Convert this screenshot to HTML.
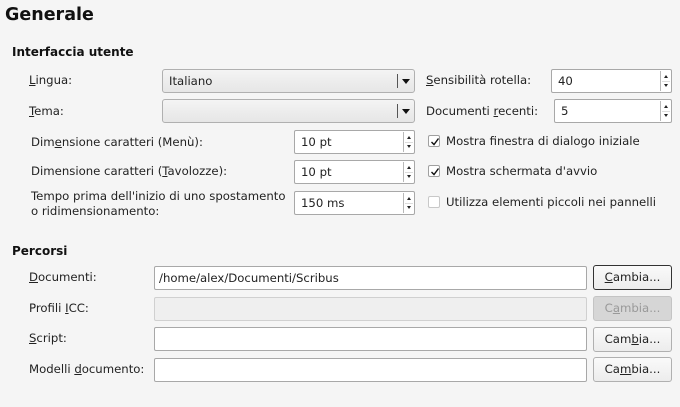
<!DOCTYPE html>
<html><head><meta charset="utf-8"><style>
*{box-sizing:border-box;margin:0;padding:0}
body{width:680px;height:407px;background:#f5f5f5;font-family:"DejaVu Sans","Liberation Sans",sans-serif;font-size:11.7px;color:#222;position:relative;overflow:hidden}
.a{position:absolute;white-space:nowrap}
.h1{font-size:17.5px;font-weight:bold;left:5px;top:5px;color:#111}
.h2{font-weight:bold;font-size:12px;color:#111}
.lbl{line-height:13px}
u{text-decoration:underline}
.combo{position:absolute;height:24px;border:1px solid #b0b0b0;border-radius:3px;background:linear-gradient(#f4f4f4,#e6e6e6);padding-left:6px;line-height:22px}
.combo .sep{position:absolute;right:16px;top:4px;bottom:4px;border-left:1px solid #555}
.combo .ar{position:absolute;right:4px;top:9px;width:0;height:0;border-left:4px solid transparent;border-right:4px solid transparent;border-top:5px solid #111}
.spin{position:absolute;height:24px;border:1px solid #a8a8a8;border-radius:2px;background:#fff;padding-left:6px;line-height:22px}
.spin .sep{position:absolute;right:10px;top:1px;bottom:1px;border-left:1px solid #b8b8b8}
.spin .up{position:absolute;right:3px;top:5px;border-left:2px solid transparent;border-right:2px solid transparent;border-bottom:3px solid #222}
.spin .dn{position:absolute;right:3px;bottom:5px;border-left:2px solid transparent;border-right:2px solid transparent;border-top:3px solid #222}
.spin .mid{position:absolute;right:1px;width:8px;top:11px;border-top:1px solid #ddd}
.cb{position:absolute;width:12px;height:12px;border:1px solid #a0a0a0;background:#fff;border-radius:2px}
.cb svg{position:absolute;left:1px;top:1px}
.fld{position:absolute;left:154px;width:433px;height:24px;border:1px solid #a8a8a8;border-radius:2px;background:#fff;padding-left:4px;line-height:22px}
.btn{position:absolute;left:593px;width:79px;height:25px;border:1px solid #b0b0b0;border-radius:3px;background:linear-gradient(#fafafa,#ececec);text-align:center;line-height:23px}
</style></head><body>
<div class="a h1">Generale</div>
<div class="a h2" style="left:12px;top:45px">Interfaccia utente</div>

<div class="a lbl" style="left:29px;top:74px"><u>L</u>ingua:</div>
<div class="combo" style="left:162px;top:69px;width:253px">Italiano<div class="sep"></div><div class="ar"></div></div>
<div class="a lbl" style="left:29px;top:105px"><u>T</u>ema:</div>
<div class="combo" style="left:162px;top:99px;width:253px"><div class="sep"></div><div class="ar"></div></div>

<div class="a lbl" style="left:31px;top:136px">Dim<u>e</u>nsione caratteri (Menù):</div>
<div class="spin" style="left:294px;top:130px;width:121px">10 pt<div class="sep"></div><div class="up"></div><div class="mid"></div><div class="dn"></div></div>
<div class="a lbl" style="left:31px;top:165px">Dimensione caratteri (<u>T</u>avolozze):</div>
<div class="spin" style="left:294px;top:160px;width:121px">10 pt<div class="sep"></div><div class="up"></div><div class="mid"></div><div class="dn"></div></div>
<div class="a lbl" style="left:31px;top:189px;line-height:15px">Tempo prima dell'inizio di uno spostamento<br>o ridimensionamento:</div>
<div class="spin" style="left:294px;top:191px;width:121px">150 ms<div class="sep"></div><div class="up"></div><div class="mid"></div><div class="dn"></div></div>

<div class="a lbl" style="left:426px;top:74px"><u>S</u>ensibilità rotella:</div>
<div class="spin" style="left:551px;top:69px;width:121px">40<div class="sep"></div><div class="up"></div><div class="mid"></div><div class="dn"></div></div>
<div class="a lbl" style="left:426px;top:105px">Documenti <u>r</u>ecenti:</div>
<div class="spin" style="left:554px;top:99px;width:118px">5<div class="sep"></div><div class="up"></div><div class="mid"></div><div class="dn"></div></div>

<div class="cb" style="left:428px;top:135px"><svg width="10" height="10"><path d="M1.5 5 L4 7.5 L8.5 1.5" stroke="#111" stroke-width="1.4" fill="none"/></svg></div>
<div class="a lbl" style="left:446px;top:135px">Mostra finestra di dialogo iniziale</div>
<div class="cb" style="left:428px;top:165px"><svg width="10" height="10"><path d="M1.5 5 L4 7.5 L8.5 1.5" stroke="#111" stroke-width="1.4" fill="none"/></svg></div>
<div class="a lbl" style="left:446px;top:165px">Mostra schermata d'avvio</div>
<div class="cb" style="left:428px;top:196px;border-color:#c8c8c8"></div>
<div class="a lbl" style="left:446px;top:196px">Utilizza elementi piccoli nei pannelli</div>

<div class="a h2" style="left:12px;top:244px">Percorsi</div>
<div class="a lbl" style="left:29px;top:271px"><u>D</u>ocumenti:</div>
<div class="fld" style="top:266px">/home/alex/Documenti/Scribus</div>
<div class="btn" style="top:265px;border-color:#333"><u>C</u>ambia...</div>
<div class="a lbl" style="left:29px;top:302px">Profili <u>I</u>CC:</div>
<div class="fld" style="top:297px;background:#efefef;border-color:#d0d0d0"></div>
<div class="btn" style="top:296px;background:#d6d6d6;color:#999;border-color:#c4c4c4">C<u>a</u>mbia...</div>
<div class="a lbl" style="left:29px;top:332px"><u>S</u>cript:</div>
<div class="fld" style="top:327px"></div>
<div class="btn" style="top:327px">Cam<u>b</u>ia...</div>
<div class="a lbl" style="left:29px;top:363px">Modelli <u>d</u>ocumento:</div>
<div class="fld" style="top:358px"></div>
<div class="btn" style="top:357px">Ca<u>m</u>bia...</div>
</body></html>
